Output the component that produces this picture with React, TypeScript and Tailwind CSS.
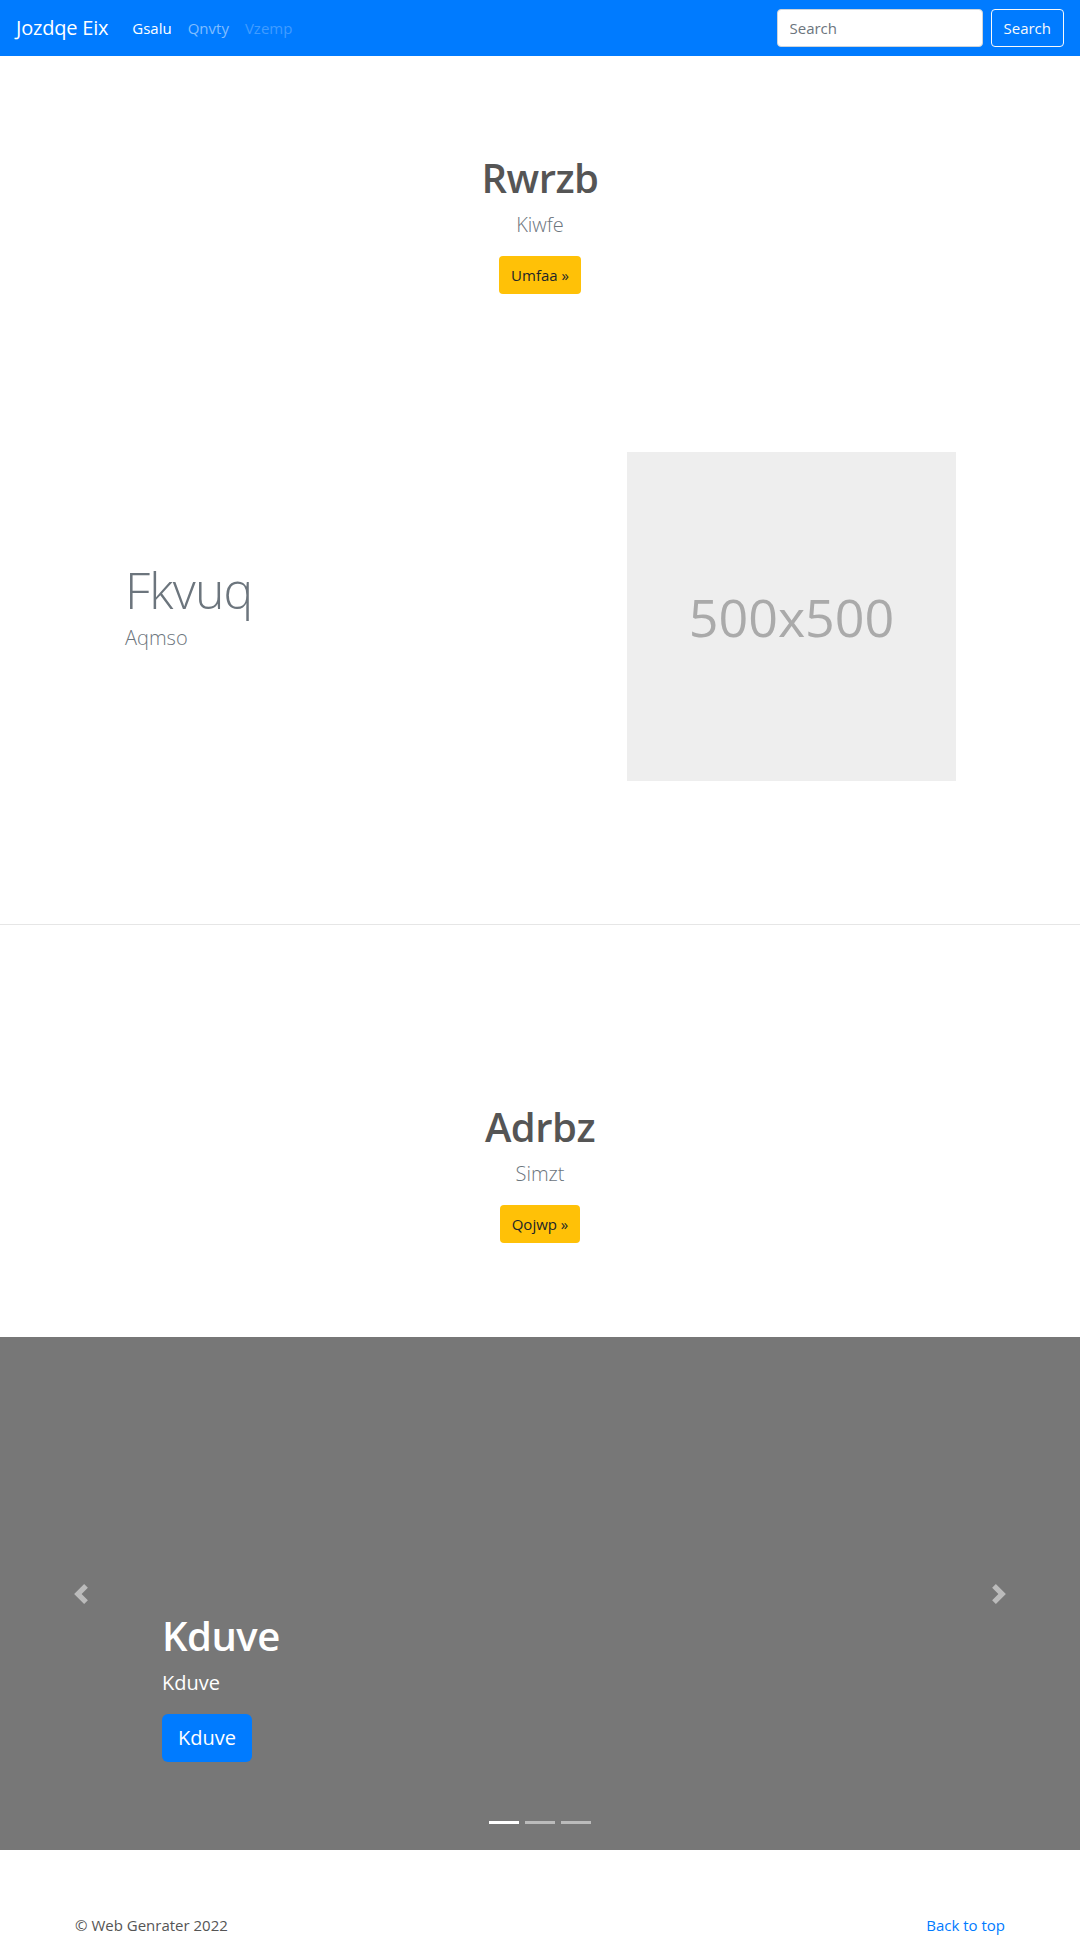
export default function App() {
  return (
    <div className="min-h-[1938px] bg-white font-['Open_Sans','Noto_Sans',sans-serif] text-[#212529]">
      {/* navbar */}
      <nav className="flex h-14 items-center justify-between bg-[#007bff] px-4">
        <div className="flex items-center">
          <a href="#" className="mr-4 text-xl leading-[30px] tracking-[-0.2px] text-white">Jozdqe Eix</a>
          <ul className="flex text-[15px]">
            <li><a href="#" className="px-2 text-white">Gsalu</a></li>
            <li><a href="#" className="px-2 text-[#80bdff]">Qnvty</a></li>
            <li><span className="px-2 text-[#409cff]">Vzemp</span></li>
          </ul>
        </div>
        <form className="flex items-center">
          <input
            type="text"
            placeholder="Search"
            className="mr-2 h-[38px] w-[206px] rounded border border-[#ced4da] bg-white px-3 text-[15px] text-[#495057] outline-none placeholder:text-[#6c757d]"
          />
          <button type="button" className="h-[38px] rounded border border-[#f8f9fa] px-3 text-[15px] text-[#f8f9fa]">
            Search
          </button>
        </form>
      </nav>

      {/* hero */}
      <section className="flex flex-col items-center pt-[98px] text-center">
        <h1 className="mb-2 text-[40px] leading-[48px] font-semibold tracking-[-0.5px] text-[#555]">Rwrzb</h1>
        <p className="mb-4 text-xl leading-[30px] font-light text-[#6c757d]">Kiwfe</p>
        <a href="#" className="flex h-[38px] items-center rounded bg-[#ffc107] px-3 text-[15px] text-[#212529]">Umfaa »</a>
      </section>

      {/* featurette */}
      <div className="mx-auto mt-[158px] flex w-[960px] items-center">
        <div className="w-[567px] pl-[65px]">
          <h2 className="mb-2 text-[50px] leading-[50px] font-light tracking-[-0.8px] text-[#6c757d]">Fkvuq</h2>
          <p className="mb-4 text-xl leading-[30px] font-light text-[#6c757d]">Aqmso</p>
        </div>
        <div className="flex h-[329px] w-[329px] items-center justify-center bg-[#eee]">
          <span className="text-[52px] text-[#aaa]">500x500</span>
        </div>
      </div>

      <hr className="mt-[143px] border-0 border-t border-[#e6e6e6]" />

      {/* second hero */}
      <section className="flex flex-col items-center pt-[178px] text-center">
        <h1 className="mb-2 text-[40px] leading-[48px] font-semibold tracking-[-0.5px] text-[#555]">Adrbz</h1>
        <p className="mb-4 text-xl leading-[30px] font-light text-[#6c757d]">Simzt</p>
        <a href="#" className="flex h-[38px] items-center rounded bg-[#ffc107] px-3 text-[15px] text-[#212529]">Qojwp »</a>
      </section>

      {/* carousel */}
      <div className="relative mt-[94px] h-[513px] bg-[#777]">
        <a href="#" className="absolute inset-y-0 left-0 flex w-[15%] items-center justify-center opacity-50">
          <svg width="20" height="20" viewBox="0 0 8 8" fill="#fff">
            <path d="M5.25 0l-4 4 4 4 1.5-1.5L4.25 4l2.5-2.5L5.25 0z" />
          </svg>
        </a>
        <a href="#" className="absolute inset-y-0 right-0 flex w-[15%] items-center justify-center opacity-50">
          <svg width="20" height="20" viewBox="0 0 8 8" fill="#fff">
            <path d="M2.75 0l-1.5 1.5L3.75 4l-2.5 2.5L2.75 8l4-4-4-4z" />
          </svg>
        </a>

        <div className="absolute right-[15%] bottom-[88px] left-[15%] text-left text-white">
          <h1 className="mb-2 text-[40px] leading-[48px] font-semibold tracking-[-0.5px]">Kduve</h1>
          <p className="mb-4 text-xl leading-[30px]">Kduve</p>
          <a href="#" className="inline-flex h-12 items-center rounded-md bg-[#007bff] px-4 text-xl">Kduve</a>
        </div>

        <ol className="absolute inset-x-0 bottom-0 mb-4 flex justify-center">
          <li className="mx-[3px] my-[10px] h-[3px] w-[30px] bg-white" />
          <li className="mx-[3px] my-[10px] h-[3px] w-[30px] bg-white opacity-50" />
          <li className="mx-[3px] my-[10px] h-[3px] w-[30px] bg-white opacity-50" />
        </ol>
      </div>

      {/* footer */}
      <footer className="mx-auto flex w-[960px] justify-between px-[15px] pt-[63px] text-[15px] leading-6">
        <p className="text-[#555]">© Web Genrater 2022</p>
        <a href="#" className="text-[#007bff]">Back to top</a>
      </footer>
    </div>
  );
}
